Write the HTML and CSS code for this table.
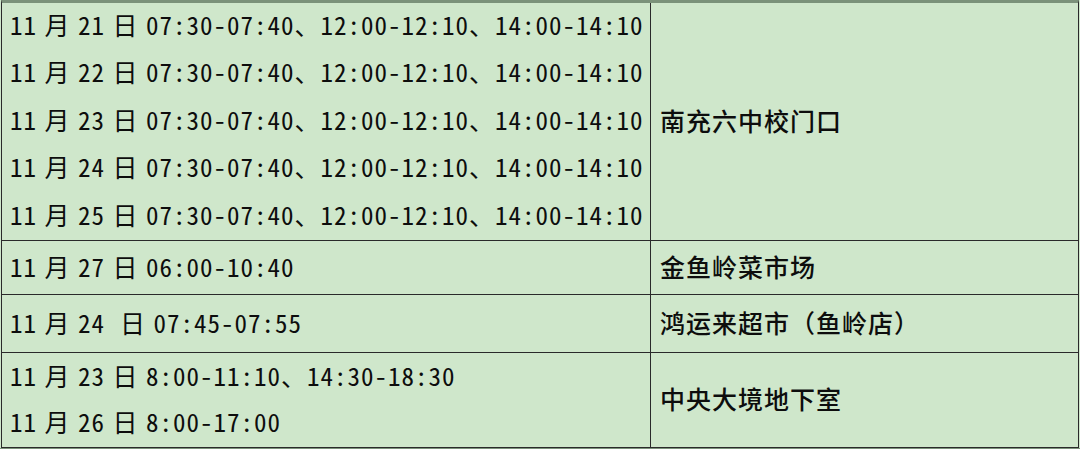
FILE: index.html
```html
<!DOCTYPE html>
<html lang="zh-CN">
<head>
<meta charset="utf-8">
<title>核酸采样时间地点</title>
<link rel="stylesheet" href="styles.css">
</head>
<body>
<div class="sheet">
  <div class="cell time r1">
    <div class="line">11 月 21 日 07:30-07:40、12:00-12:10、14:00-14:10</div>
    <div class="line">11 月 22 日 07:30-07:40、12:00-12:10、14:00-14:10</div>
    <div class="line">11 月 23 日 07:30-07:40、12:00-12:10、14:00-14:10</div>
    <div class="line">11 月 24 日 07:30-07:40、12:00-12:10、14:00-14:10</div>
    <div class="line">11 月 25 日 07:30-07:40、12:00-12:10、14:00-14:10</div>
  </div>
  <div class="cell place r1">南充六中校门口</div>

  <div class="cell time r2">
    <div class="line">11 月 27 日 06:00-10:40</div>
  </div>
  <div class="cell place r2">金鱼岭菜市场</div>

  <div class="cell time r3">
    <div class="line">11 月 24&nbsp; 日 07:45-07:55</div>
  </div>
  <div class="cell place r3">鸿运来超市（鱼岭店）</div>

  <div class="cell time r4">
    <div class="line">11 月 23 日 8:00-11:10、14:30-18:30</div>
    <div class="line">11 月 26 日 8:00-17:00</div>
  </div>
  <div class="cell place r4">中央大境地下室</div>
</div>
<div class="foot"></div>
</body>
</html>
```
FILE: styles.css
```css
html, body {
  margin: 0;
  padding: 0;
  background: #cfe7cb;
}
body {
  width: 1080px;
  height: 449px;
  overflow: hidden;
  font-family: "Noto Sans CJK SC", "Noto Sans", sans-serif;
  font-size: 25px;
  font-weight: 400;
  letter-spacing: 1px;
  color: #0d0d0d;
}
.sheet {
  display: grid;
  grid-template-columns: 649px 427px;
  margin-left: 1px;
  width: 1078px;
  border-top: 3px solid #7b927a;
  border-left: 1px solid #2a2a2a;
  border-right: 1px solid #2a2a2a;
  box-sizing: border-box;
}
.cell {
  display: flex;
  flex-direction: column;
  justify-content: center;
  border-bottom: 1px solid #2a2a2a;
  box-sizing: border-box;
  white-space: pre;
  padding-bottom: 4px;
}
.time {
  border-right: 1px solid #2a2a2a;
  padding-left: 8px;
  font-feature-settings: "hwid" 1;
  word-spacing: -6px;
}
.place {
  padding-left: 9px;
  font-weight: 500;
}
.r1 { height: 238px; }
.r2 { height: 54px; }
.r3 { height: 58px; }
.r4 { height: 95px; }
.r1 .line { line-height: 47.4px; }
.r4 .line { line-height: 46px; }
.foot {
  height: 1px;
  background: #7b927a;
}
```
